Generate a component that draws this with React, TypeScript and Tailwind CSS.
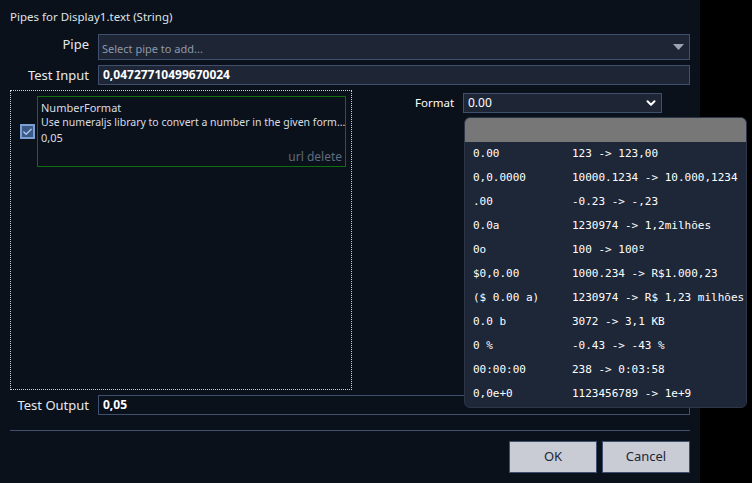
import { Check, ChevronDown } from "lucide-react";

const formats: [string, string][] = [
  ["0.00", "123 -> 123,00"],
  ["0,0.0000", "10000.1234 -> 10.000,1234"],
  [".00", "-0.23 -> -,23"],
  ["0.0a", "1230974 -> 1,2milhões"],
  ["0o", "100 -> 100º"],
  ["$0,0.00", "1000.234 -> R$1.000,23"],
  ["($ 0.00 a)", "1230974 -> R$ 1,23 milhões"],
  ["0.0 b", "3072 -> 3,1 KB"],
  ["0 %", "-0.43 -> -43 %"],
  ["00:00:00", "238 -> 0:03:58"],
  ["0,0e+0", "1123456789 -> 1e+9"],
];

const App = () => {
  return (
    <div className="flex h-[483px] w-[752px] bg-black font-['Noto_Sans',sans-serif] text-[#e6e9ee]">
      <div className="relative flex w-[700px] flex-col bg-[#0b111a] pl-[10px] pr-[10px]">
        {/* Title */}
        <div className="mt-[8px] h-[18px] text-[11.5px] leading-[18px] text-[#dfe3e8]">
          Pipes for Display1.text (String)
        </div>

        {/* Pipe */}
        <div className="mt-[8px] flex h-[26px] items-start gap-[9px]">
          <div className="w-[79px] text-right text-[13px] leading-[20px]">Pipe</div>
          <div className="flex h-[26px] flex-1 items-end justify-between border border-[#3f4f6f] bg-[#1e2636] pb-[3px] pl-[3px] pr-[5px]">
            <span className="text-[11px] leading-[14px] text-[#8d98a8]">Select pipe to add...</span>
            <svg width="11" height="6" viewBox="0 0 11 6" className="mb-[6px]">
              <path d="M0 0h11L5.5 6z" fill="#9ba4b2" />
            </svg>
          </div>
        </div>

        {/* Test Input */}
        <div className="mt-[5px] flex h-[20px] items-center gap-[9px]">
          <div className="w-[79px] text-right text-[13px] leading-[20px]">Test Input</div>
          <div className="flex h-[20px] flex-1 items-center border border-[#3f4f6f] bg-[#1e2636] px-[4px] text-[12px] font-bold text-white">
            0,04727710499670024
          </div>
        </div>

        {/* Middle */}
        <div className="mt-[5px] flex h-[300px]">
          <div className="flex h-[300px] w-[342px] items-start border border-dotted border-[#cfd3d8] pl-[9px] pr-[5px] pt-[5px]">
            <div className="mt-[28px] flex h-[15px] w-[15px] shrink-0 items-center justify-center border-2 border-[#7a9fd2] bg-[#3b5886]">
              <Check size={12} strokeWidth={3} className="text-[#a9c7ee]" />
            </div>
            <div className="ml-[2px] flex h-[71px] min-w-0 flex-1 flex-col border border-[#0e6e0e] px-[3px] pt-[3px] text-[11px] leading-[15px] text-[#d9dde3]">
              <div>NumberFormat</div>
              <div className="whitespace-nowrap text-[10.5px]">Use numeraljs library to convert a number in the given form...</div>
              <div>0,05</div>
              <div className="mt-auto pb-[2px] text-right text-[12px] text-[#5f6c7e]">url delete</div>
            </div>
          </div>
          <div className="flex flex-1 items-start pl-[63px] pt-[3px]">
            <div className="mt-[2px] w-[36px] text-[11.5px] leading-[16px] text-white">Format</div>
            <div className="ml-[12px] flex h-[20px] w-[199px] items-center justify-between border border-[#3f4f6f] bg-[#1e2636] pl-[4px] pr-[3px] text-[12px] text-white">
              <span>0.00</span>
              <ChevronDown size={14} strokeWidth={3.5} className="text-white" />
            </div>
          </div>
        </div>

        {/* Test Output */}
        <div className="mt-[5px] flex h-[20px] items-center gap-[9px]">
          <div className="w-[79px] text-right text-[13px] leading-[20px]">Test Output</div>
          <div className="flex h-[20px] flex-1 items-center border border-[#3f4f6f] px-[4px] text-[12px] font-bold text-white">
            0,05
          </div>
        </div>

        <div className="mt-[15px] h-px bg-[#3f4f6f]" />

        {/* Buttons */}
        <div className="mt-[10px] flex justify-end gap-[5px]">
          <button className="h-[32px] w-[88px] border border-[#3f4f6f] bg-[#c9ccd4] text-[13px] text-[#1e2636]">
            OK
          </button>
          <button className="h-[32px] w-[88px] border border-[#3f4f6f] bg-[#c9ccd4] text-[13px] text-[#1e2636]">
            Cancel
          </button>
        </div>

        {/* Format dropdown */}
        <div className="absolute left-[464px] top-[117px] h-[291px] w-[283px] overflow-hidden rounded-[6px] border border-[#2c3647] bg-[#1e2737] font-['DejaVu_Sans_Mono',monospace] text-[11px] text-white">
          <div className="h-[24px] bg-[#777777]" />
          {formats.map(([f, ex]) => (
            <div key={f} className="flex h-[24px] items-center pl-[8px]">
              <span className="w-[99px]">{f}</span>
              <span className="whitespace-nowrap">{ex}</span>
            </div>
          ))}
        </div>
      </div>
    </div>
  );
};

export default App;
